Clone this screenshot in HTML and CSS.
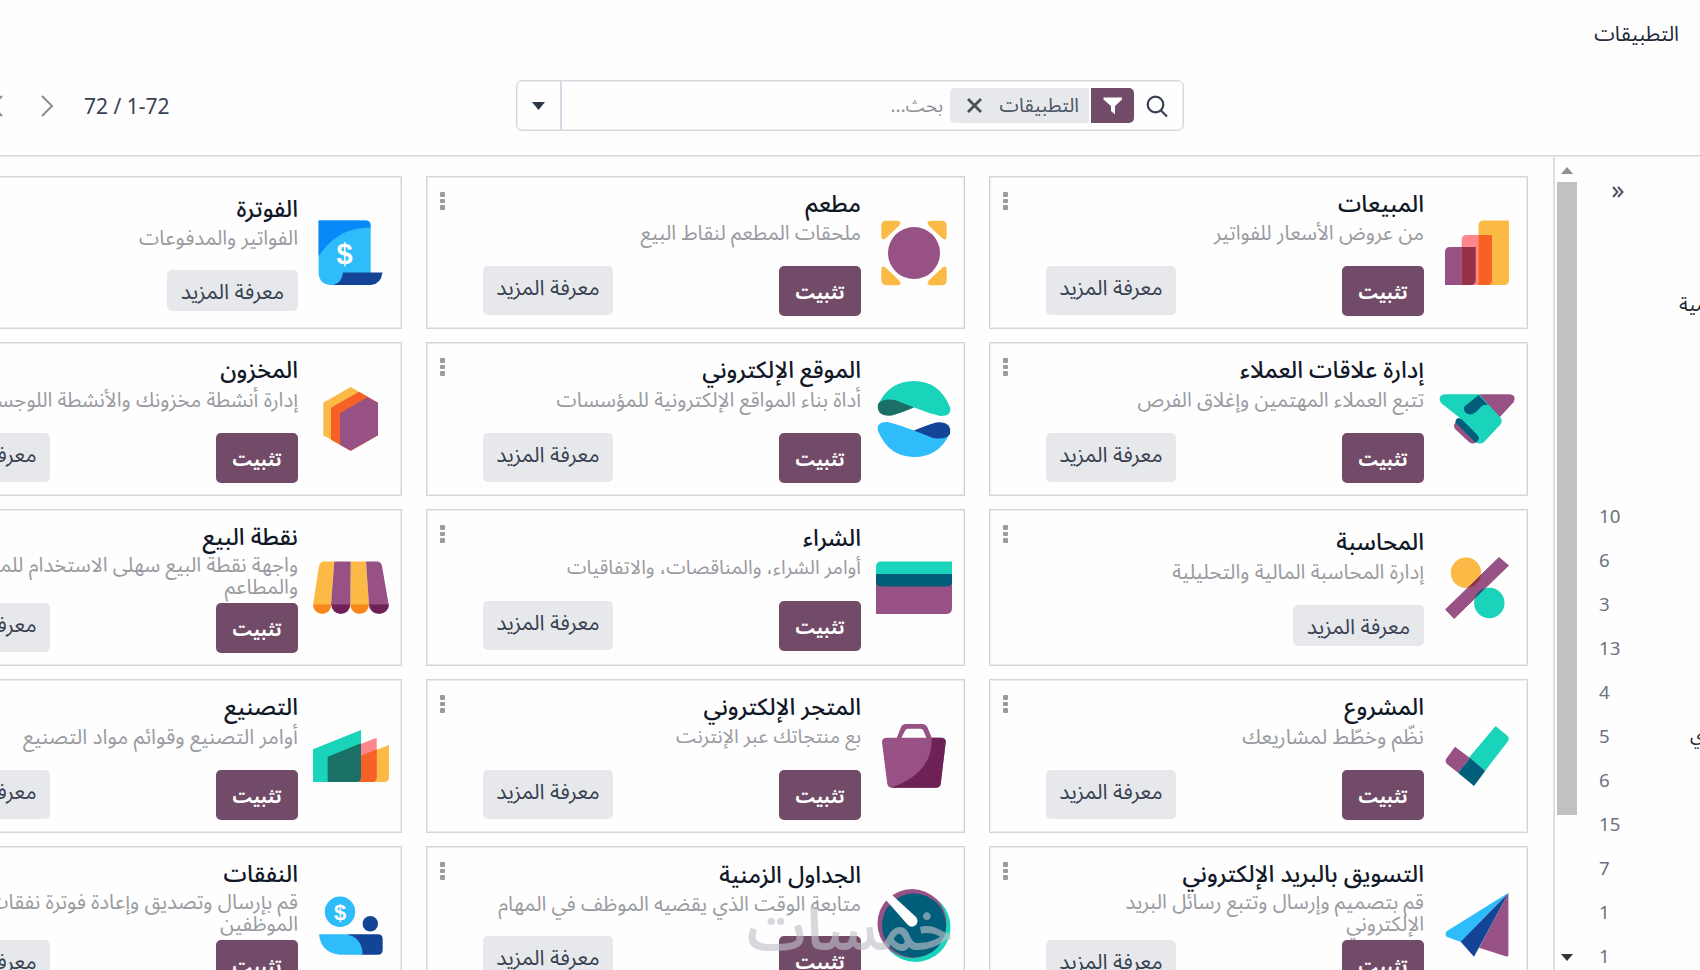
FILE: index.html
```html
<!DOCTYPE html>
<html lang="ar">
<head>
<meta charset="utf-8">
<title>التطبيقات</title>
<link rel="stylesheet" href="styles.css">
</head>
<body>
<header class="navbar" dir="rtl"><span class="brand">التطبيقات</span></header>
<section class="control">
  <div class="pager">
    <svg class="prev" width="14" height="22" viewBox="0 0 14 22"><path d="M12 1 2 11l10 10"/></svg>
    <svg class="next" width="14" height="22" viewBox="0 0 14 22"><path d="M2 1l10 10L2 21"/></svg>
    <span class="count">72 / 1-72</span>
  </div>
  <div class="search">
    <div class="toggle"><svg width="14" height="8" viewBox="0 0 14 8"><path d="M0 0h13L6.500 8z" fill="#2d3748"/></svg></div>
    <div class="field" dir="rtl">
      <svg class="lens" width="24" height="24" viewBox="0 0 24 24"><circle cx="10.500" cy="10.500" r="7.800"/><path d="M16 16.500l6 6"/></svg>
      <div class="facet">
        <span class="funnel"><svg width="20" height="18" viewBox="0 0 20 18"><path d="M.5.5h18.500v2L12 9v8.500L8 14V9L.5 2.500z" fill="#fff"/></svg></span>
        <span class="facet-body"><span class="facet-label">التطبيقات</span><svg width="15" height="15" viewBox="0 0 15 15"><path d="M1 1l13 13M14 1L1 14" stroke="#495057" stroke-width="2.800"/></svg></span>
      </div>
      <span class="placeholder">بحث...</span>
    </div>
  </div>
</section>
<main class="content">
<div class="kanban" dir="rtl">

<article class="card">
  <svg class="icon" viewBox="0 0 76 76"><path fill="#985184" d="M6 70V37q0-5 5-5h25.700v33q0 5-5 5z"/><path fill="#fc868b" d="M22.700 70V25q0-5 5-5H53v45q0 5-5 5z"/><path fill="#fbb945" d="M39.500 70V11q0-5.500 5-5.500H70V65q0 5-5 5z"/><path fill="#953245" d="M22.700 32h14v33q0 5-5 5h-9z"/><path fill="#f86126" d="M39.500 20H53v45q0 5-5 5h-8.500z"/></svg>
  <div class="body"><h3>المبيعات</h3><p>من عروض الأسعار للفواتير</p><div class="actions"><button class="install">تثبيت</button><button class="more">معرفة المزيد</button></div></div>
  <span class="dots"><i></i><i></i><i></i></span>
</article>

<article class="card">
  <svg class="icon" viewBox="0 0 76 76"><path fill="#fbb945" d="M5.300 11q0-5.200 5-5.200H20q7 0 3 5L10 23q-4.700 4-4.700-3zM70.700 11q0-5.200-5-5.200H56q-7 0-3 5L66 23q4.700 4 4.700-3zM5.300 65q0 5.200 5 5.200H20q7 0 3-5L10 53q-4.700-4-4.700 3zM70.700 65q0 5.200-5 5.200H56q-7 0-3-5L66 53q4.700-4 4.700 3z"/><circle cx="38" cy="38" r="28" fill="#fefefe"/><circle cx="38" cy="38" r="26" fill="#985184"/></svg>
  <div class="body"><h3>مطعم</h3><p>ملحقات المطعم لنقاط البيع</p><div class="actions"><button class="install">تثبيت</button><button class="more">معرفة المزيد</button></div></div>
  <span class="dots"><i></i><i></i><i></i></span>
</article>

<article class="card single">
  <svg class="icon" viewBox="0 0 76 76"><path fill="#2ebcfa" d="M5.600 5.500H53q4.700 0 4.700 5V60L32 70H17Q5.600 69 5.600 57z"/><path fill="#0889f8" d="M5.600 5.500H53q4.700 0 4.700 7Q25 12 5.600 41z"/><path fill="#144496" d="M30 57.500h39.500Q68 69 58 70H20q9-2 10-12.500z"/><text x="31.600" y="48.500" text-anchor="middle" class="dollar">$</text></svg>
  <div class="body"><h3>الفوترة</h3><p>الفواتير والمدفوعات</p><div class="actions"><button class="more">معرفة المزيد</button></div></div>
</article>

<article class="card">
  <svg class="icon" viewBox="0 0 76 76"><path fill="#985184" d="M40 13.300h31q7 1 3.500 8L60 37z"/><path fill="#985184" d="M21 37l-5 5q-2 3 0 6l14 13q4 3 7 0l4-5z"/><path fill="#1ad3bb" d="M5 13.300h35L61 36q3.500 4 0 8L45 61q-4 3-8 0l3-4-19-20L2 22q-4-7 3-8.700z"/><path fill="#005e7a" d="M39.500 14l9.500 10q-5-1-9 4-6 7-11 5-5-2-4-7zM18 37.500q3-1 6 2l14 14q3 3 1 6l-2 2.500-6-6-14-14q-1.500-2 1-4.500z"/></svg>
  <div class="body"><h3>إدارة علاقات العملاء</h3><p>تتبع العملاء المهتمين وإغلاق الفرص</p><div class="actions"><button class="install">تثبيت</button><button class="more">معرفة المزيد</button></div></div>
  <span class="dots"><i></i><i></i><i></i></span>
</article>

<article class="card">
  <svg class="icon" viewBox="0 0 76 76"><path fill="#1ad3bb" d="M2 24Q13 0 38 0t36 26q2 9-9 9-7-1-27-8.500L16 22z"/><path fill="#1a6f66" d="M2 23q4-6 17-4l19 7.500Q25 32 16 34.500 0 36 2 23z"/><path fill="#2ebcfa" d="M74 52Q63 76 38 76T2 50q-2-9 9-9 7 1 27 8.500L60 54z"/><path fill="#144496" d="M74 53q-4 6-17 4l-19-7.500Q51 44 60 41.500 76 40 74 53z"/></svg>
  <div class="body"><h3>الموقع الإلكتروني</h3><p>أداة بناء المواقع الإلكترونية للمؤسسات</p><div class="actions"><button class="install">تثبيت</button><button class="more">معرفة المزيد</button></div></div>
  <span class="dots"><i></i><i></i><i></i></span>
</article>

<article class="card">
  <svg class="icon" viewBox="0 0 76 76"><path fill="#fbb945" d="M37.700 6L65 21.700v32.600L37.700 69.700 10.300 54.300V21.700z"/><path fill="#f86126" d="M46 10.700l19 11v32.600L37.700 69.700 18 58.700v-32z"/><path fill="#985184" d="M54.300 16.300L65 21.700v32.600L37.700 69.700l-10.700-6V32.300z"/></svg>
  <div class="body"><h3>المخزون</h3><p>إدارة أنشطة مخزونك والأنشطة اللوجستية</p><div class="actions"><button class="install">تثبيت</button><button class="more">معرفة المزيد</button></div></div>
</article>

<article class="card single">
  <svg class="icon" viewBox="0 0 76 76"><defs><clipPath id="bar"><path d="M60 7.500l9.400 8-54.300 53-8.500-9z"/></clipPath></defs><circle cx="27" cy="22.700" r="15.200" fill="#fbb945"/><circle cx="50.300" cy="53" r="15.200" fill="#1ad3bb"/><path fill="#985184" stroke="#985184" stroke-width="1" stroke-linejoin="round" d="M60 7.500l9.400 8-54.300 53-8.500-9z"/><g clip-path="url(#bar)"><circle cx="27" cy="22.700" r="15.200" fill="#953245"/><circle cx="50.300" cy="53" r="15.200" fill="#005e7a"/></g></svg>
  <div class="body"><h3>المحاسبة</h3><p>إدارة المحاسبة المالية والتحليلية</p><div class="actions"><button class="more">معرفة المزيد</button></div></div>
  <span class="dots"><i></i><i></i><i></i></span>
</article>

<article class="card low">
  <svg class="icon" viewBox="0 0 76 76"><path fill="#985184" d="M0 30h76v28q0 6-6 6H0z"/><path fill="#005e7a" d="M0 24h76v7q0 5.500-5 5.500H5q-5 0-5-5.500z"/><path fill="#1ad3bb" d="M0 24v-7q0-5.500 5-5.500h71V24z"/></svg>
  <div class="body"><h3>الشراء</h3><p class="tight">أوامر الشراء، والمناقصات، والاتفاقيات</p><div class="actions"><button class="install">تثبيت</button><button class="more">معرفة المزيد</button></div></div>
  <span class="dots"><i></i><i></i><i></i></span>
</article>

<article class="card two">
  <svg class="icon" viewBox="0 0 76 76"><path fill="#fbb945" d="M6 16q1-4.500 5-4.500h10.300L18 55H0zM37.700 11.500H53L56 55H37.300z"/><path fill="#985184" d="M21.300 11.500h16.400L37.300 55H18zM53 11.500h11q4 0 5 4.500l6.700 39H56z"/><path fill="#f8861b" d="M0 54.500h18.300a9.100 9.500 0 0 1-18.300 0zM37.300 54.500H56a9.300 9.500 0 0 1-18.700 0z"/><path fill="#6e2155" d="M18.300 54.500h19a9.500 9.500 0 0 1-19 0zM56 54.500h20a10 9.500 0 0 1-20 0z"/></svg>
  <div class="body"><h3>نقطة البيع</h3><p>واجهة نقطة البيع سهلى الاستخدام للمتاجر<br>والمطاعم</p><div class="actions"><button class="install">تثبيت</button><button class="more">معرفة المزيد</button></div></div>
</article>

<article class="card">
  <svg class="icon" viewBox="0 0 76 76"><path fill="#1ad3bb" d="M56.600 8l12 10q2 2 .5 5L46 53 29.700 40z"/><path fill="#985184" d="M16 28.700L31 40 19 54.700 8 46q-2-2-1-5z"/><path fill="#005e7a" d="M31 40l15.200 13L35 68 19 54.700z"/></svg>
  <div class="body"><h3>المشروع</h3><p class="wide">نظّم وخطّط لمشاريعك</p><div class="actions"><button class="install">تثبيت</button><button class="more">معرفة المزيد</button></div></div>
  <span class="dots"><i></i><i></i><i></i></span>
</article>

<article class="card">
  <svg class="icon" viewBox="0 0 76 76"><path fill="#985184" fill-rule="evenodd" d="M6 24q0-4.300 5-4.300h9.800l4-10Q26 6 30 6h16q4 0 5.500 3.500l4.300 10.200H65q5 0 4.700 4.300l-5 42q-.5 3.700-5 3.700H16q-4 0-4.700-3.700zM25.400 19.700h25l-3-7q-.7-2-3-2H32q-2 0-3 2z"/><path fill="#6e2155" d="M55.800 19.700H65q5 0 4.700 4.300l-5 42q-.5 3.700-5 3.700H15Q57 55 55.800 19.700z"/></svg>
  <div class="body"><h3>المتجر الإلكتروني</h3><p class="tight">بع منتجاتك عبر الإنترنت</p><div class="actions"><button class="install">تثبيت</button><button class="more">معرفة المزيد</button></div></div>
  <span class="dots"><i></i><i></i><i></i></span>
</article>

<article class="card">
  <svg class="icon" viewBox="0 0 76 76"><path fill="#fbb945" d="M48 38l28-11v32q0 5-5 5H48z"/><path fill="#fc868b" d="M40 29l23.700-9.300V59q0 5-5 5H40z"/><path fill="#f86126" d="M46 38.800l17.700-7.500V59q0 5-5 5H46z"/><path fill="#1ad3bb" d="M0 31.300L48 12v47q0 5-5 5H0z"/><path fill="#1a6f66" d="M14.700 38.700L48 25.300V59q0 5-5 5H14.700z"/></svg>
  <div class="body"><h3>التصنيع</h3><p class="wide">أوامر التصنيع وقوائم مواد التصنيع</p><div class="actions"><button class="install">تثبيت</button><button class="more">معرفة المزيد</button></div></div>
</article>

<article class="card two">
  <svg class="icon" viewBox="0 0 76 76"><path fill="#2ebcfa" d="M69 6L8 44q-3 3 0 6l14 5z"/><path fill="#985184" d="M69.400 6v62q0 2-2 1.500L40 60.700z"/><path fill="#144496" d="M69.400 6L21.700 54.700 35 69.700z"/></svg>
  <div class="body"><h3>التسويق بالبريد الإلكتروني</h3><p>قم بتصميم وإرسال وتتبع رسائل البريد<br>الإلكتروني</p><div class="actions"><button class="install">تثبيت</button><button class="more">معرفة المزيد</button></div></div>
  <span class="dots"><i></i><i></i><i></i></span>
</article>

<article class="card low last">
  <svg class="icon" viewBox="0 0 76 76"><circle cx="39.500" cy="40" r="35" fill="#1ad3bb"/><circle cx="36" cy="36.500" r="34.500" fill="#985184"/><circle cx="38" cy="38.500" r="32" fill="#005e7a"/><path fill="#fefefe" d="M9 12l6-5 25 23q3 4 0 8-5 4-9-1z"/></svg>
  <div class="body"><h3>الجداول الزمنية</h3><p>متابعة الوقت الذي يقضيه الموظف في المهام</p><div class="actions"><button class="install">تثبيت</button><button class="more">معرفة المزيد</button></div></div>
  <span class="dots"><i></i><i></i><i></i></span>
  <span class="watermark">خمسات</span>
</article>

<article class="card two">
  <svg class="icon" viewBox="0 0 76 76"><circle cx="27" cy="24.700" r="15.200" fill="#2ebcfa"/><text x="27" y="32.500" text-anchor="middle" class="dollar small">$</text><circle cx="57.300" cy="36.700" r="7.700" fill="#144496"/><path fill="#144496" d="M34 47.300h31q4.700 0 4.700 5V63q0 4.700-5 4.700H48z"/><path fill="#2ebcfa" d="M6 47.300h26q17 2 17.700 20.400H27Q8 66 6 47.300z"/></svg>
  <div class="body"><h3>النفقات</h3><p>قم بإرسال وتصديق وإعادة فوترة نفقات<br>الموظفين</p><div class="actions"><button class="install">تثبيت</button><button class="more">معرفة المزيد</button></div></div>
</article>

</div>
<div class="scroll">
  <svg width="12" height="7" viewBox="0 0 12 7"><path d="M0 7h12L6 0z" fill="#8f8f94"/></svg>
  <div class="thumb"></div>
  <svg width="12" height="7" viewBox="0 0 12 7"><path d="M0 0h12L6 7z" fill="#333"/></svg>
</div>
<aside class="sidebar">
  <svg class="collapse" width="12" height="12" viewBox="0 0 12 12"><path d="M1 1l4.500 5L1 11M6 1l4.500 5L6 11"/></svg>
  <div class="heading">سمية</div>
  <ul>
    <li><b>10</b></li><li><b>6</b></li><li><b>3</b></li><li><b>13</b></li><li><b>4</b></li>
    <li><b>5</b><span>ي</span></li>
    <li><b>6</b></li><li><b>15</b></li><li><b>7</b></li><li><b>1</b></li><li><b>1</b></li>
  </ul>
</aside>
</main>
</body>
</html>
```
FILE: styles.css
```css
* { box-sizing: border-box; }
body {
  margin: 0; width: 1700px; height: 970px; overflow: hidden;
  background: #fefefe; color: #374151;
  font-family: "Noto Sans", "Noto Sans Arabic", "DejaVu Sans", sans-serif;
  display: flex; flex-direction: column;
}
.navbar { height: 68px; padding: 0 21px; display: flex; align-items: center; font-size: 20.8px; color: #1f2937; flex: none; }
.control { height: 89px; flex: none; border-bottom: 1px solid #ebecef; box-shadow: inset 0 -1px #d4d6dc; display: flex; padding-top: 12px; }
.pager { width: 516px; height: 51px; display: flex; align-items: center; font-size: 21px; }
.pager svg { fill: none; stroke: #8b8d94; stroke-width: 2; flex: none; }
.prev { margin-left: -10px; }
.next { margin-left: 36px; }
.count { margin-left: 30px; white-space: nowrap; }
.search { width: 668px; height: 51px; border: 1px solid #d4d8de; box-shadow: inset 0 0 0 1px #e9ecf0; border-radius: 6px; display: flex; }
.toggle { width: 45px; border-right: 2px solid #d3dbe6; display: flex; align-items: center; justify-content: center; }
.field { flex: 1; display: flex; align-items: center; padding-right: 14px; }
.lens { fill: none; stroke: #374151; stroke-width: 2.2; }
.facet { display: flex; margin-right: 11px; gap: 2px; height: 35px; }
.funnel { width: 43px; background: #714b67; border-radius: 0 5px 5px 0; display: flex; align-items: center; justify-content: center; }
.facet-body { width: 139px; background: #e7e8ec; border-radius: 5px 0 0 5px; display: flex; align-items: center; justify-content: space-between; padding: 0 10px 0 17px; }
.facet-label { font-size: 19.5px; color: #4b5563; }
.placeholder { margin-right: 7px; font-size: 18.7px; color: #8f9197; }

.content { flex: 1; display: flex; min-height: 0; }
.kanban {
  width: 1555px; flex: none; overflow: hidden; border-right: 2px solid #dddee3;
  padding: 19px 25px 0 0; display: grid;
  grid-template-columns: 539px 539px 539px; grid-template-rows: 153px 154px 157px 154px 157px;
  column-gap: 24px; row-gap: 13px;
}
.card { border: 1px solid #d2d4da; box-shadow: inset 0 0 0 1px #ebecef; display: flex; position: relative; padding-right: 12px; }
.icon { width: 76px; height: 76px; flex: none; align-self: center; overflow: visible; }
.body { width: 378px; margin-right: 15px; padding-top: 11px; display: flex; flex-direction: column; }
h3, p { margin: 0; white-space: nowrap; }
h3 { font-size: 23.4px; line-height: 30px; height: 30px; font-weight: 500; color: #111827; }
p { font-size: 20.4px; line-height: 22px; height: 48px; padding-top: 3px; color: #9a9ba1; }
.card:nth-child(n+4) p { padding-top: 4px; height: 49px; }
.actions { display: flex; justify-content: space-between; }
button { font: inherit; border: 0; border-radius: 5px; height: 50px; padding: 0; white-space: nowrap; }
.install { width: 82px; background: #714b67; color: #fff; font-weight: 700; font-size: 18.2px; padding-top: 3px; }
.more { width: 130px; background: #e7e8ec; color: #374151; font-size: 21.2px; padding-bottom: 7px; height: 49px; }
p.tight { font-size: 19.7px; }
p.wide { font-size: 20.9px; }
.low .body { padding-top: 12px; }
.card.low:nth-child(n+4) p { height: 49px; }
.card.last:nth-child(n+4) p { padding-top: 3px; height: 47px; }
.two .body { padding-top: 11px; }
.card.two:nth-child(n+4) p { padding-top: 3px; height: 52px; line-height: 21.5px; }
.single .body { padding-top: 16px; }
.single p { padding-top: 3px; height: 47px; }
.card.single:nth-child(n+4) p { padding-top: 4px; height: 49px; }
.single .more { width: 131px; height: 41px; padding: 0; }
.dots { margin-right: auto; margin-left: 13px; padding-top: 15px; display: flex; flex-direction: column; gap: 2px; }
.dots i { width: 5px; height: 4.5px; background: #9a9ba1; border-radius: 1px; }
.dollar { font: 900 29px "Liberation Sans", sans-serif; fill: #fff; }
.small { font-size: 22px; }
.watermark { position: absolute; right: 11px; top: 40px; font-size: 59px; font-weight: 600; line-height: 80px; color: #c0c2ca; opacity: .62; }

.scroll { width: 24px; display: flex; flex-direction: column; align-items: center; padding: 10px 0 8px; flex: none; }
.thumb { width: 20px; height: 633px; background: #c1c1c1; margin: 8px 0 139px; }
.sidebar { flex: 1; min-width: 0; overflow: hidden; padding-left: 20px; color: #4b5563; }
.collapse { display: block; margin: 29px 0 0 13px; fill: none; stroke: #4b5563; stroke-width: 2; }
.heading { margin: 91px 0 0 80px; height: 30px; line-height: 30px; font-size: 20px; white-space: nowrap; color: #1f2937; }
ul { list-style: none; margin: 174px 0 0; padding: 0; }
li { height: 44px; display: flex; align-items: center; font-size: 18.7px; }
li b { font-weight: 400; width: 91px; flex: none; color: #6b7280; }
li span { color: #1f2937; }
```
